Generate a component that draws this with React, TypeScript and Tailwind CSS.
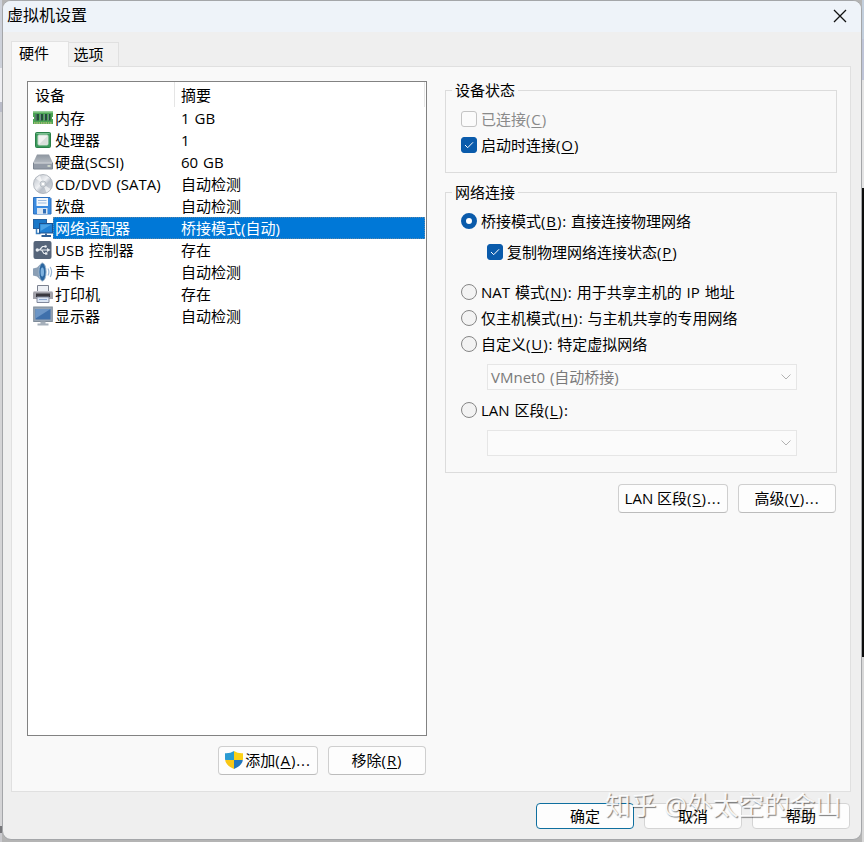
import type { ReactNode } from 'react';

interface Device {
  name: string;
  summary: string;
  icon: ReactNode;
  selected?: boolean;
}

const svgProps = { width: 20, height: 20, viewBox: '0 0 20 20', className: 'shrink-0' };

const MemoryIcon = () => (
  <svg {...svgProps}>
    <path d="M0 3.500h20v5.500h-1v2h1v5h-20v-5h1v-2h-1z" fill="#4aa553" />
    <path d="M0 3.500h20v1.200H0z" fill="#8acb8c" />
    <path d="M2.500 6h3.500v6.500H2.500zM7 6h3v6.500H7zM11 6h3v6.500h-3zM15 6h2.500v6.500H15z" fill="#24503a" />
    <path d="M2.500 6h1v6.500h-1zM7 6h1v6.500H7zM11 6h1v6.500h-1zM15 6h1v6.500h-1z" fill="#6d8c86" />
    <path d="M1 15h18" stroke="#b8c27c" strokeWidth="1.600" strokeDasharray="1.500 .8" />
  </svg>
);

const CpuIcon = () => (
  <svg {...svgProps}>
    <rect x="2.500" y="2.500" width="15" height="15" rx="1" fill="#3c9a5c" stroke="#2b8049" />
    <path d="M3.500 3.500h13" stroke="#7cc292" />
    <rect x="5" y="5" width="10" height="10" rx="1" fill="#f0f2f0" stroke="#c4dac9" />
    <path d="M6 14.500l8.500-8.500v8.500z" fill="#d9dfdb" />
  </svg>
);

const DiskIcon = () => (
  <svg {...svgProps}>
    <defs>
      <linearGradient id="disk" x1="0" y1="0" x2="0" y2="1">
        <stop offset="0" stopColor="#8d959f" />
        <stop offset="1" stopColor="#d3d7dc" />
      </linearGradient>
    </defs>
    <path d="M4 2.500h12l4 8.500v6H0v-6z" fill="url(#disk)" />
    <path d="M.5 11h19v6H.5z" fill="#939ba7" stroke="#7b8490" />
    <path d="M1 11h18" stroke="#e9ebee" />
    <path d="M14.500 14h3" stroke="#dfe9d6" strokeWidth="1.500" />
  </svg>
);

const CdIcon = () => (
  <svg {...svgProps}>
    <defs>
      <linearGradient id="cd" x1="0" y1="0" x2="1" y2="1">
        <stop offset="0" stopColor="#b5bbc3" />
        <stop offset=".45" stopColor="#eff1f4" />
        <stop offset=".6" stopColor="#b9bfc8" />
        <stop offset="1" stopColor="#d8dce1" />
      </linearGradient>
    </defs>
    <circle cx="10" cy="10" r="9.500" fill="url(#cd)" stroke="#a5abb4" strokeWidth=".8" />
    <path d="M10 10L3 4.500A9 9 0 0 1 7 1.500zM10 10l7.500 5a9 9 0 0 1-4 3.500z" fill="#fff" opacity=".65" />
    <circle cx="10" cy="10" r="3" fill="#d4d8dd" stroke="#b0b6be" strokeWidth=".8" />
    <circle cx="10" cy="10" r="1.300" fill="#fff" />
  </svg>
);

const FloppyIcon = () => (
  <svg {...svgProps}>
    <path d="M.5 1.500h16.500l1 1v15.500H.5z" fill="#3b8be0" stroke="#2f71bf" />
    <path d="M3.500 2h11.500v8H3.500z" fill="#f4f8fc" />
    <path d="M5 4.500h8.500M5 7h8.500" stroke="#9dbbe0" />
    <path d="M4 12h10.500v6H4z" fill="#dce6f1" />
    <path d="M10 13h3v4.500h-3z" fill="#326fb8" />
  </svg>
);

const NetworkIcon = () => (
  <svg {...svgProps}>
    <rect x=".5" y="1.500" width="13" height="9" fill="#1a78c8" stroke="#2561a0" />
    <path d="M3.500 11v4.500h4" fill="none" stroke="#3b7fc0" strokeWidth="1.500" />
    <rect x="6.500" y="5.500" width="13" height="9.500" fill="#1f80d4" stroke="#1c5390" />
    <path d="M7.500 6.500h11L7.500 13z" fill="#4ba3e6" />
    <path d="M8.500 18h9.500M13 15.500v2.500" stroke="#2d5f96" strokeWidth="1.800" />
  </svg>
);

const UsbIcon = () => (
  <svg {...svgProps}>
    <rect x=".5" y="1" width="18" height="18" rx="2" fill="#56657a" />
    <path d="M4 10h11M6.500 10l3-3.500h3M8.500 10l2.500 3.500h2" fill="none" stroke="#e9edf1" strokeWidth="1.200" />
    <circle cx="4.300" cy="10" r="1.700" fill="#e9edf1" />
    <path d="M14 8l3.500 2-3.500 2z" fill="#e9edf1" />
    <circle cx="12.500" cy="6.500" r="1.300" fill="#e9edf1" />
    <path d="M12 12.300h2.400v2.400H12z" fill="#e9edf1" />
  </svg>
);

const SoundIcon = () => (
  <svg {...svgProps}>
    <path d="M0 6.500l4-1 5-5q4 4 4 9.500t-4 9.500l-5-5-4-1z" fill="#8b9fb5" />
    <ellipse cx="9.500" cy="10" rx="3.600" ry="9" fill="#2b66a0" stroke="#9eb7cf" />
    <ellipse cx="9.300" cy="10" rx="1.700" ry="4.500" fill="#7fb2df" />
    <path d="M15 6.500q1.800 3.500 0 7M17.200 5q2.800 5 0 10" fill="none" stroke="#9bb9d8" strokeWidth="1.200" />
  </svg>
);

const PrinterIcon = () => (
  <svg {...svgProps}>
    <path d="M4.500 1.500h11v7h-11z" fill="#eef1f6" stroke="#7c8290" />
    <path d="M1 7h18l1 2v6H0V9z" fill="#a3a3ab" />
    <path d="M1 7.500h18" stroke="#c9c9d0" />
    <path d="M3 9.500h14v3.500H3z" fill="#39383f" />
    <path d="M4 13h12v5.500H4z" fill="#dbe5f3" stroke="#81889b" />
    <path d="M6 15.500h8" stroke="#8fa9d0" />
  </svg>
);

const DisplayIcon = () => (
  <svg {...svgProps}>
    <rect x=".7" y="1" width="18.600" height="14.500" fill="#98a5b4" stroke="#7f8c9a" />
    <rect x="2.500" y="3" width="15" height="10.500" fill="#3f70ab" />
    <path d="M2.500 3h15L2.500 12.500z" fill="#6b95c6" />
    <path d="M7.500 15.500h5v2h3v2h-11v-2h3z" fill="#a5afba" />
  </svg>
);

const ShieldIcon = () => (
  <svg width="18" height="18" viewBox="0 0 18 18" className="shrink-0">
    <defs>
      <clipPath id="shield">
        <path d="M9 0Q12.500 2.500 18 2.200V8Q17.500 14.500 9 18Q.5 14.500 0 8V2.200Q5.500 2.500 9 0z" />
      </clipPath>
    </defs>
    <g clipPath="url(#shield)">
      <path d="M0 0h9v9H0z" fill="#2b9bd2" />
      <path d="M9 0h9v9H9z" fill="#fcd116" />
      <path d="M0 9h9v9H0z" fill="#f8c716" />
      <path d="M9 9h9v9H9z" fill="#2377bd" />
    </g>
  </svg>
);

const devices: Device[] = [
  { name: '内存', summary: '1 GB', icon: <MemoryIcon /> },
  { name: '处理器', summary: '1', icon: <CpuIcon /> },
  { name: '硬盘(SCSI)', summary: '60 GB', icon: <DiskIcon /> },
  { name: 'CD/DVD (SATA)', summary: '自动检测', icon: <CdIcon /> },
  { name: '软盘', summary: '自动检测', icon: <FloppyIcon /> },
  { name: '网络适配器', summary: '桥接模式(自动)', icon: <NetworkIcon />, selected: true },
  { name: 'USB 控制器', summary: '存在', icon: <UsbIcon /> },
  { name: '声卡', summary: '自动检测', icon: <SoundIcon /> },
  { name: '打印机', summary: '存在', icon: <PrinterIcon /> },
  { name: '显示器', summary: '自动检测', icon: <DisplayIcon /> },
];

// Accelerator key, underlined inside parentheses
const Key = ({ k, more }: { k: string; more?: boolean }) => (
  <span className="tracking-[0.9px]">
    (<span className="underline decoration-1 underline-offset-2">{k}</span>){more && '...'}
  </span>
);

function Checkbox({ checked, disabled, children }: { checked?: boolean; disabled?: boolean; children: ReactNode }) {
  return (
    <label className={`flex h-[26px] items-center gap-[4px] ${disabled ? 'text-[#8a8a8a]' : 'text-black'}`}>
      <span
        className={`flex size-4 items-center justify-center rounded-[3px] border ${
          checked ? 'border-[#0a5bab] bg-[#0a5bab]' : 'border-[#c4c4c4] bg-[#fbfbfb]'
        }`}
      >
        {checked && (
          <svg width="10" height="10" viewBox="0 0 10 10">
            <path d="M1 5l2.700 2.700L9 2.300" fill="none" stroke="#fff" />
          </svg>
        )}
      </span>
      <span>{children}</span>
    </label>
  );
}

function Radio({ checked, children }: { checked?: boolean; children: ReactNode }) {
  return (
    <label className="flex h-[26px] items-center gap-[4px]">
      <span
        className={`size-4 rounded-full ${
          checked ? 'border-[5px] border-[#0a5bab] bg-white' : 'border border-[#868686] bg-[#f3f3f3]'
        }`}
      />
      <span>{children}</span>
    </label>
  );
}

function Select({ value }: { value?: string }) {
  return (
    <div className="mt-[7px] ml-[26px] flex h-[26px] w-[310px] items-center justify-between border border-[#e6e6e6] bg-[#fbfbfb] pr-[5px] pl-[3px] text-[#7a7a7a]">
      <span>{value}</span>
      <svg width="10" height="6" viewBox="0 0 10 6">
        <path d="M.5.500L5 5l4.500-4.500" fill="none" stroke="#b2b2b2" />
      </svg>
    </div>
  );
}

function Button({ className, children }: { className: string; children: ReactNode }) {
  return (
    <button className={`flex items-center justify-center rounded-[4px] border bg-[#fdfdfd] ${className}`}>
      {children}
    </button>
  );
}

export default function App() {
  return (
    <div className="relative flex h-[842px] w-[864px] overflow-hidden bg-[#b4b4b4] font-['Open_Sans','Noto_Sans_CJK_SC',sans-serif] text-[15px] leading-5 [word-spacing:1px] whitespace-nowrap text-black">
      {/* Windows showing behind the dialog */}
      <div className="flex w-[2px] shrink-0 flex-col">
        <div className="h-[68px] bg-[#cdd1da]" />
        <div className="h-[34px] bg-[#eeeef2]" />
        <div className="h-[10px] bg-[#b9bbc8]" />
        <div className="h-[714px] bg-[#d4d4d6]" />
        <div className="h-[7px] bg-[#77777b]" />
        <div className="flex-1 bg-[#c9c9cd]" />
      </div>

      <div className="flex h-[840px] w-[860px] shrink-0 flex-col rounded-[9px] border border-[#a4a6a9] bg-[#efefef]">
        <div className="flex h-[31px] shrink-0 items-center justify-between rounded-t-[8px] bg-[#eef3f9] pr-[14px] pl-[4px]">
          <h1 className="pb-[3px] text-[16px]">虚拟机设置</h1>
          <svg width="14" height="14" viewBox="0 0 14 14" className="mb-px">
            <path d="M1 1l12 12M13 1L1 13" stroke="#111" strokeWidth="1.300" />
          </svg>
        </div>

        {/* Tabs */}
        <div className="flex h-[34px] items-end pl-[8px]">
          <div className="relative -mb-px flex h-[26px] w-[58px] justify-center border border-b-0 border-[#e2e2e2] bg-[#f9f9f9] pt-px pr-3">
            硬件
          </div>
          <div className="flex h-[24px] w-[50px] justify-center border border-b-0 border-l-0 border-[#e0e0e0] bg-[#f1f1f1] pt-px pr-[10px]">
            选项
          </div>
        </div>

        <div className="mr-[10px] ml-[8px] flex h-[726px] border border-[#e0e0e0] bg-[#f9f9f9] pt-[14px] pl-[15px]">
          <div className="w-[400px]">
            <div className="h-[655px] border border-[#828282] bg-white">
              <div className="flex h-[25px] items-center">
                <span className="flex h-full w-[147px] items-center border-r border-[#e5e5e5] pl-[7px]">设备</span>
                <span className="flex h-full w-[250px] items-center border-r border-[#e5e5e5] pl-[6px]">摘要</span>
              </div>
              {devices.map((device) => (
                <div key={device.name} className="flex h-[22px] items-center pl-[5px]">
                  {device.icon}
                  <div
                    className={`flex h-[22px] w-[372px] items-center pb-px pl-[2px] ${
                      device.selected ? 'bg-[#0078d7] text-white outline-1 -outline-offset-1 outline-dotted outline-[#5f88a8]' : ''
                    }`}
                  >
                    <span className="w-[126px]">{device.name}</span>
                    <span>{device.summary}</span>
                  </div>
                </div>
              ))}
            </div>
            <div className="mt-[10px] flex justify-end gap-[10px] pr-px">
              <Button className="h-[29px] w-[100px] gap-[2px] border-[#cfcfcf] border-b-[#bcbcbc] pb-px">
                <ShieldIcon />
                <span>添加<Key k="A" more /></span>
              </Button>
              <Button className="h-[29px] w-[98px] border-[#cfcfcf] border-b-[#bcbcbc] pb-px">
                <span>移除<Key k="R" /></span>
              </Button>
            </div>
          </div>

          <div className="ml-[18px] w-[392px]">
            <fieldset className="-mt-px h-[93px] border border-[#dcdcdc] pl-[15px]">
              <legend className="-ml-[9px] h-5 px-[3px]">设备状态</legend>
              <div className="pt-[6px]">
                <Checkbox disabled>已连接<Key k="C" /></Checkbox>
                <Checkbox checked>启动时连接<Key k="O" /></Checkbox>
              </div>
            </fieldset>

            <fieldset className="mt-[9px] h-[291px] border border-[#dcdcdc] pl-[15px]">
              <legend className="-ml-[9px] h-5 px-[3px]">网络连接</legend>
              <div className="pt-[6px]">
                <Radio checked>桥接模式<Key k="B" />: 直接连接物理网络</Radio>
                <div className="mt-[5px] mb-[14px] ml-[26px]">
                  <Checkbox checked>复制物理网络连接状态<Key k="P" /></Checkbox>
                </div>
                <Radio>NAT 模式<Key k="N" />: 用于共享主机的 IP 地址</Radio>
                <Radio>仅主机模式<Key k="H" />: 与主机共享的专用网络</Radio>
                <Radio>自定义<Key k="U" />: 特定虚拟网络</Radio>
                <Select value="VMnet0 (自动桥接)" />
                <div className="mt-[7px]">
                  <Radio>LAN 区段<Key k="L" />:</Radio>
                </div>
                <Select />
              </div>
            </fieldset>

            <div className="mt-[11px] flex justify-end gap-[10px] pr-px">
              <Button className="h-[29px] w-[110px] border-[#cfcfcf] border-b-[#bcbcbc] pb-px">
                <span>LAN 区段<Key k="S" more /></span>
              </Button>
              <Button className="h-[29px] w-[98px] border-[#cfcfcf] border-b-[#bcbcbc] pb-px">
                <span>高级<Key k="V" more /></span>
              </Button>
            </div>
          </div>
        </div>

        <div className="mt-[11px] mr-[11px] flex justify-end gap-[10px]">
          <Button className="h-[26px] w-[98px] border-[#0f6f9f]">确定</Button>
          <Button className="h-[26px] w-[98px] border-[#d4d4d4]">
            <span className="relative z-10">取消</span>
          </Button>
          <Button className="h-[26px] w-[98px] border-[#d4d4d4]">
            <span className="relative z-10">帮助</span>
          </Button>
        </div>
      </div>

      <div className="flex w-[2px] shrink-0 flex-col">
        <div className="h-[39px] bg-[#c3cfdd]" />
        <div className="h-[41px] bg-[#bfc5d8]" />
        <div className="h-[108px] bg-[#e4e4e4]" />
        <div className="h-[469px] bg-[#0c0c0c]" />
        <div className="flex-1 bg-[#d8d8d8]" />
      </div>

      <div className="absolute top-[789px] left-[605px] text-[25.7px] leading-[34px] text-white/90 [text-shadow:1px_1px_1px_#00000080]">
        知乎 @外太空的金山
      </div>
    </div>
  );
}
